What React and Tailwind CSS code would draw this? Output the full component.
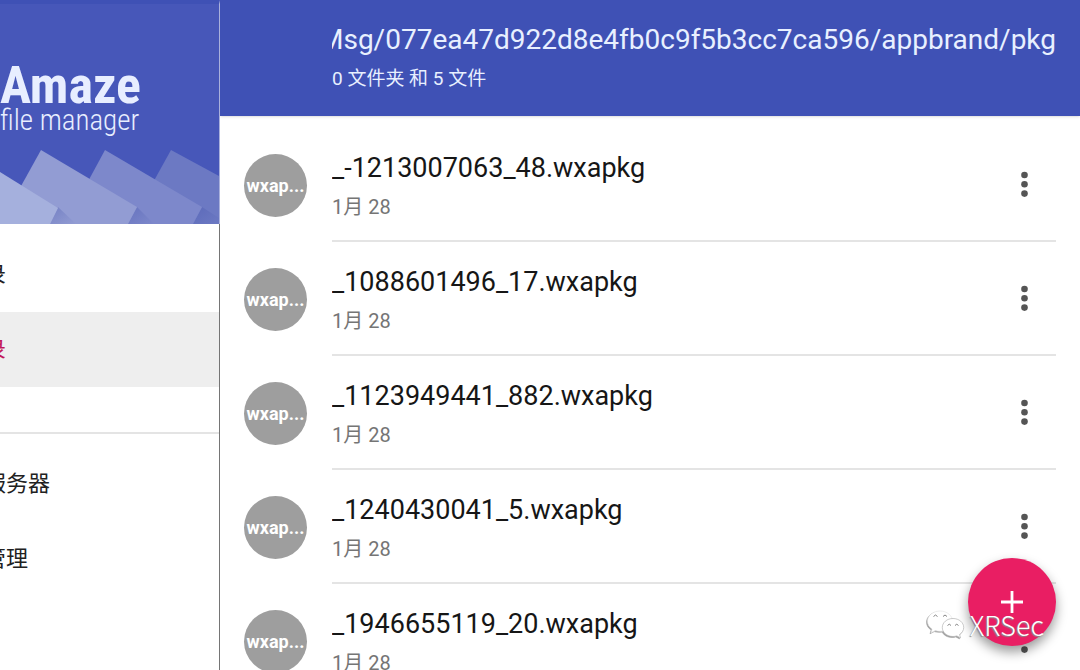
import React from 'react';

const files = [
  { name: '_-1213007063_48.wxapkg', date: '1月 28' },
  { name: '_1088601496_17.wxapkg', date: '1月 28' },
  { name: '_1123949441_882.wxapkg', date: '1月 28' },
  { name: '_1240430041_5.wxapkg', date: '1月 28' },
  { name: '_1946655119_20.wxapkg', date: '1月 28' },
];

const DrawerBanner = () => (
  <div className="relative h-[224px] shrink-0 overflow-hidden border-t-4 border-r border-t-[#3f51b5] border-r-[#aab1dc] bg-[#4757b9]">
    <svg
      className="absolute bottom-0 left-0 h-[220px] w-[219px]"
      viewBox="0 4 219 220"
      aria-hidden="true"
    >
      <defs>
        <linearGradient id="shade" x1="0" y1="0" x2="1" y2="1">
          <stop offset="0" stopColor="#3f4fa8" stopOpacity="0.35" />
          <stop offset="1" stopColor="#3f4fa8" stopOpacity="0" />
        </linearGradient>
      </defs>
      <path d="M171 150 L219 176 V224 H130 Z" fill="#6c79c3" />
      <path d="M202 207 L219 218 V224 H193 Z" fill="url(#shade)" />
      <path d="M105 150 L202 207 L193 224 H65 Z" fill="#7d88cb" />
      <path d="M137 207 L154 224 H128 Z" fill="url(#shade)" />
      <path d="M41 150 L137 207 L128 224 H0 V224 Z" fill="#929cd3" />
      <path d="M58 207 L76 224 H50 Z" fill="url(#shade)" />
      <path d="M0 172 L58 208 L50 224 H0 Z" fill="#a5b0dd" />
    </svg>
    <div className="relative pt-[58px] font-['Roboto_Condensed',Roboto,sans-serif] text-[#e8eeff]">
      <h1 className="text-[52px] leading-[48px] font-bold">Amaze</h1>
      <p className="text-[29px] leading-[20px] font-light">file manager</p>
    </div>
  </div>
);

const DrawerItem = ({ label, active }) => (
  <a
    href="#"
    className={
      active
        ? 'flex h-[75px] items-center bg-[#eeeeee] text-[#c2185b]'
        : 'flex h-[75px] items-center text-[#212121]'
    }
  >
    <span className="-ml-4 whitespace-nowrap">{label}</span>
  </a>
);

const FileRow = ({ file }) => (
  <li className="flex h-[114px] shrink-0 pl-6 pr-6">
    <div className="flex w-[88px] shrink-0 items-center">
      <div className="flex size-[63px] items-center justify-center rounded-full bg-[#9e9e9e] text-[18px] font-bold text-white">
        wxap...
      </div>
    </div>
    <div className="flex min-w-0 flex-1 items-center border-b-2 border-[#e4e4e4]">
      <div className="min-w-0 flex-1 pt-1.5">
        <p className="truncate text-[27px] leading-[40px] text-[#161616]">{file.name}</p>
        <p className="text-[20px] leading-[38px] text-[#757575]">{file.date}</p>
      </div>
      <button type="button" aria-label="More" className="flex h-12 w-16 items-center justify-center">
        <svg className="h-7 w-2" viewBox="0 0 8 28" fill="#555555">
          <circle cx="4.500" cy="5" r="3.3" />
          <circle cx="4.500" cy="14.300" r="3.3" />
          <circle cx="4.500" cy="23.600" r="3.3" />
        </svg>
      </button>
    </div>
  </li>
);

const Watermark = () => (
  <div className="pointer-events-none absolute right-9 bottom-[25px] flex items-center gap-0.5">
    <svg
      className="h-[30px] w-[42px] drop-shadow-[-1px_1px_0_#a0a0a0]"
      viewBox="0 0 42 30"
      fill="#ffffff"
      stroke="#e2e2e2"
      strokeWidth="0.6"
    >
      <path d="M14 1C7 1 1.500 5.500 1.500 11.200c0 3.300 1.800 6 4.600 7.900L5 22.800l4.300-2.200c1.500.5 3 .7 4.700.7 7 0 12.500-4.500 12.500-10.100S21 1 14 1Z" />
      <path d="M27 8.500c-6 0-10.700 4-10.700 9s4.700 9 10.700 9c1.300 0 2.600-.2 3.800-.6l3.800 2-1-3.300c2.500-1.700 4.100-4.200 4.100-7.100 0-5-4.700-9-10.700-9Z" stroke="#a8a8a8" />
      <path d="M7.500 6.500q2-3 4 0M17 6.500q2-3 4 0M21.500 15.500q1.800-2.600 3.500 0M29 15.500q1.800-2.600 3.500 0" fill="none" stroke="#777777" strokeWidth="0.9" />
    </svg>
    <span className="font-['Noto_Sans_CJK_SC',sans-serif] text-[27px] leading-[40px] font-light text-white [text-shadow:-1px_1px_1px_#8a8a8a]">
      XRSec
    </span>
  </div>
);

const App = () => {
  return (
    <div className="relative flex h-screen overflow-hidden bg-white font-[Roboto,'Noto_Sans_CJK_SC',sans-serif]">
      <aside className="flex w-[220px] shrink-0 flex-col overflow-hidden bg-white">
        <DrawerBanner />
        <nav className="flex-1 border-r border-[#757575] pt-[13px] text-[22px]">
          <DrawerItem label="录" />
          <DrawerItem label="录" active />
          <div className="h-[47px] border-b-2 border-[#e4e4e4]" />
          <div className="pt-3">
            <DrawerItem label="服务器" />
            <DrawerItem label="管理" />
          </div>
        </nav>
      </aside>

      <main className="flex min-w-0 flex-1 flex-col">
        <header className="h-[116px] shrink-0 bg-[#3f51b5] pt-5 pr-6 pl-28 text-[#e8f0ff] shadow-sm">
          <div className="flex justify-end overflow-hidden">
            <h2 className="text-[28px] leading-[40px] whitespace-nowrap">
              Msg/077ea47d922d8e4fb0c9f5b3cc7ca596/appbrand/pkg
            </h2>
          </div>
          <p className="text-[19px] leading-[38px]">0 文件夹 和 5 文件</p>
        </header>
        <ul className="flex flex-1 flex-col overflow-hidden pt-3">
          {files.map((file) => (
            <FileRow key={file.name} file={file} />
          ))}
        </ul>
      </main>

      <button
        type="button"
        aria-label="Add"
        className="absolute right-6 bottom-6 flex size-[88px] items-center justify-center rounded-full bg-[#e91e63] shadow-[0_6px_12px_rgba(0,0,0,0.4)]"
      >
        <svg className="size-6" viewBox="0 0 24 24" stroke="#ffffff" strokeWidth="2.8">
          <path d="M12 1v22M1 12h22" />
        </svg>
      </button>
      <Watermark />
    </div>
  );
};

export default App;
